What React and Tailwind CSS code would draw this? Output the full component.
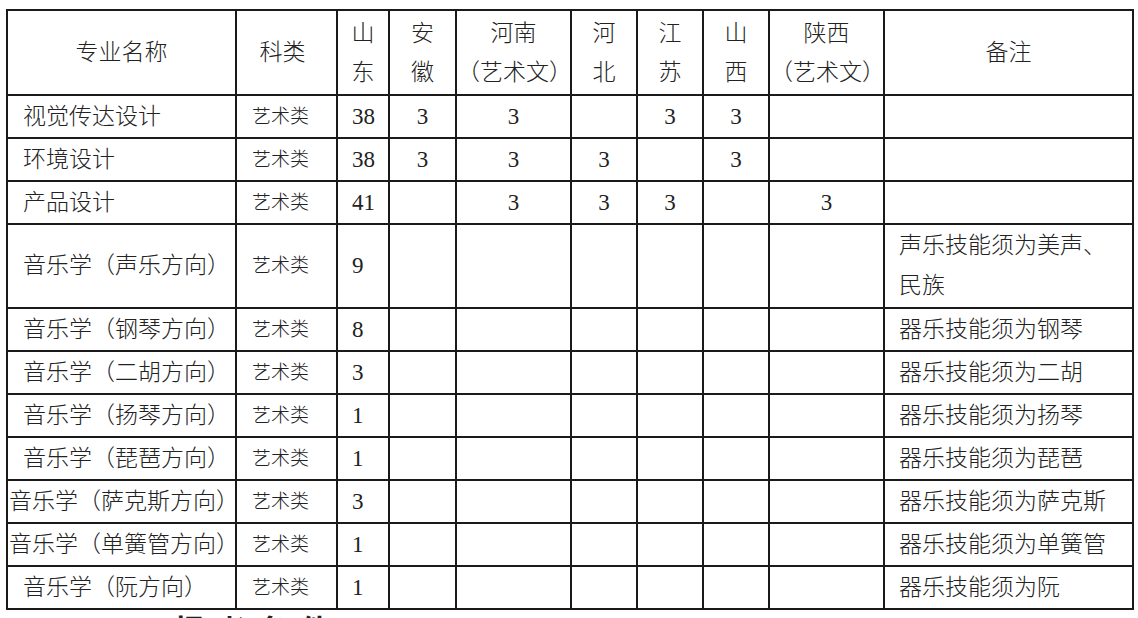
import React from 'react';

const rows = [
    { name: '视觉传达设计', sd: '38', ah: '3', hn: '3', hb: '', js: '3', sx: '3', snx: '', note: '' },
    { name: '环境设计', sd: '38', ah: '3', hn: '3', hb: '3', js: '', sx: '3', snx: '', note: '' },
    { name: '产品设计', sd: '41', ah: '', hn: '3', hb: '3', js: '3', sx: '', snx: '3', note: '' },
    { name: '音乐学（声乐方向）', sd: '9', note: ['声乐技能须为美声、', '民族'], tall: true },
    { name: '音乐学（钢琴方向）', sd: '8', note: '器乐技能须为钢琴' },
    { name: '音乐学（二胡方向）', sd: '3', note: '器乐技能须为二胡' },
    { name: '音乐学（扬琴方向）', sd: '1', note: '器乐技能须为扬琴' },
    { name: '音乐学（琵琶方向）', sd: '1', note: '器乐技能须为琵琶' },
    { name: '音乐学（萨克斯方向）', sd: '3', note: '器乐技能须为萨克斯', wide: true },
    { name: '音乐学（单簧管方向）', sd: '1', note: '器乐技能须为单簧管', wide: true },
    { name: '音乐学（阮方向）', sd: '1', note: '器乐技能须为阮' },
];

const heads = [
    ['专业名称'],
    ['科类'],
    ['山', '东'],
    ['安', '徽'],
    ['河南', '（艺术文）'],
    ['河', '北'],
    ['江', '苏'],
    ['山', '西'],
    ['陕西', '（艺术文）'],
    ['备注'],
];

const cell = 'border-2 border-[#1a1a1a] p-0';

const App = () => {
    return (
        <div
            className="w-[1138px] h-[618px] overflow-hidden bg-white text-[#222]"
            style={{ fontFamily: '"Liberation Serif", "Noto Sans CJK SC", serif' }}
        >
            <div className="pt-[9px] pl-[6px]">
                <table className="table-fixed border-collapse w-[1126px] text-[23px] font-light leading-[28px]">
                    <colgroup>
                        <col className="w-[229px]" />
                        <col className="w-[101px]" />
                        <col className="w-[52px]" />
                        <col className="w-[67px]" />
                        <col className="w-[115px]" />
                        <col className="w-[66px]" />
                        <col className="w-[66px]" />
                        <col className="w-[66px]" />
                        <col className="w-[115px]" />
                        <col className="w-[249px]" />
                    </colgroup>
                    <thead>
                        <tr className="h-[85px]">
                            {heads.map((h, i) => (
                                <th key={i} className={`${cell} font-light text-center ${i === 1 ? 'pr-[8px]' : ''}`}>
                                    {h.map((line) => (
                                        <div key={line} className="leading-[39px] whitespace-nowrap text-[#222]">
                                            {line}
                                        </div>
                                    ))}
                                </th>
                            ))}
                        </tr>
                    </thead>
                    <tbody>
                        {rows.map((r) => (
                            <tr key={r.name} className={r.tall ? 'h-[84px]' : 'h-[43px]'}>
                                <td className={`${cell} whitespace-nowrap ${r.wide ? 'pl-[1px]' : 'pl-[15px]'}`}>
                                    {r.name}
                                </td>
                                <td className={`${cell} text-center text-[19px] pr-[12px]`}>艺术类</td>
                                <td className={`${cell} pl-[14px]`}>{r.sd}</td>
                                <td className={`${cell} text-center`}>{r.ah}</td>
                                <td className={`${cell} text-center`}>{r.hn}</td>
                                <td className={`${cell} text-center`}>{r.hb}</td>
                                <td className={`${cell} text-center`}>{r.js}</td>
                                <td className={`${cell} text-center`}>{r.sx}</td>
                                <td className={`${cell} text-center`}>{r.snx}</td>
                                <td className={`${cell} pl-[14px] pr-[4px] whitespace-nowrap`}>
                                    {Array.isArray(r.note) ? (
                                        <div className="leading-[40px]">
                                            {r.note[0]}
                                            <br />
                                            {r.note[1]}
                                        </div>
                                    ) : (
                                        r.note
                                    )}
                                </td>
                            </tr>
                        ))}
                    </tbody>
                </table>
            </div>
            <div className="pl-[90px] pt-[1px] text-[30px] font-bold leading-[40px] tracking-[12px]">
                三、报考条件
            </div>
        </div>
    );
};

export default App;
